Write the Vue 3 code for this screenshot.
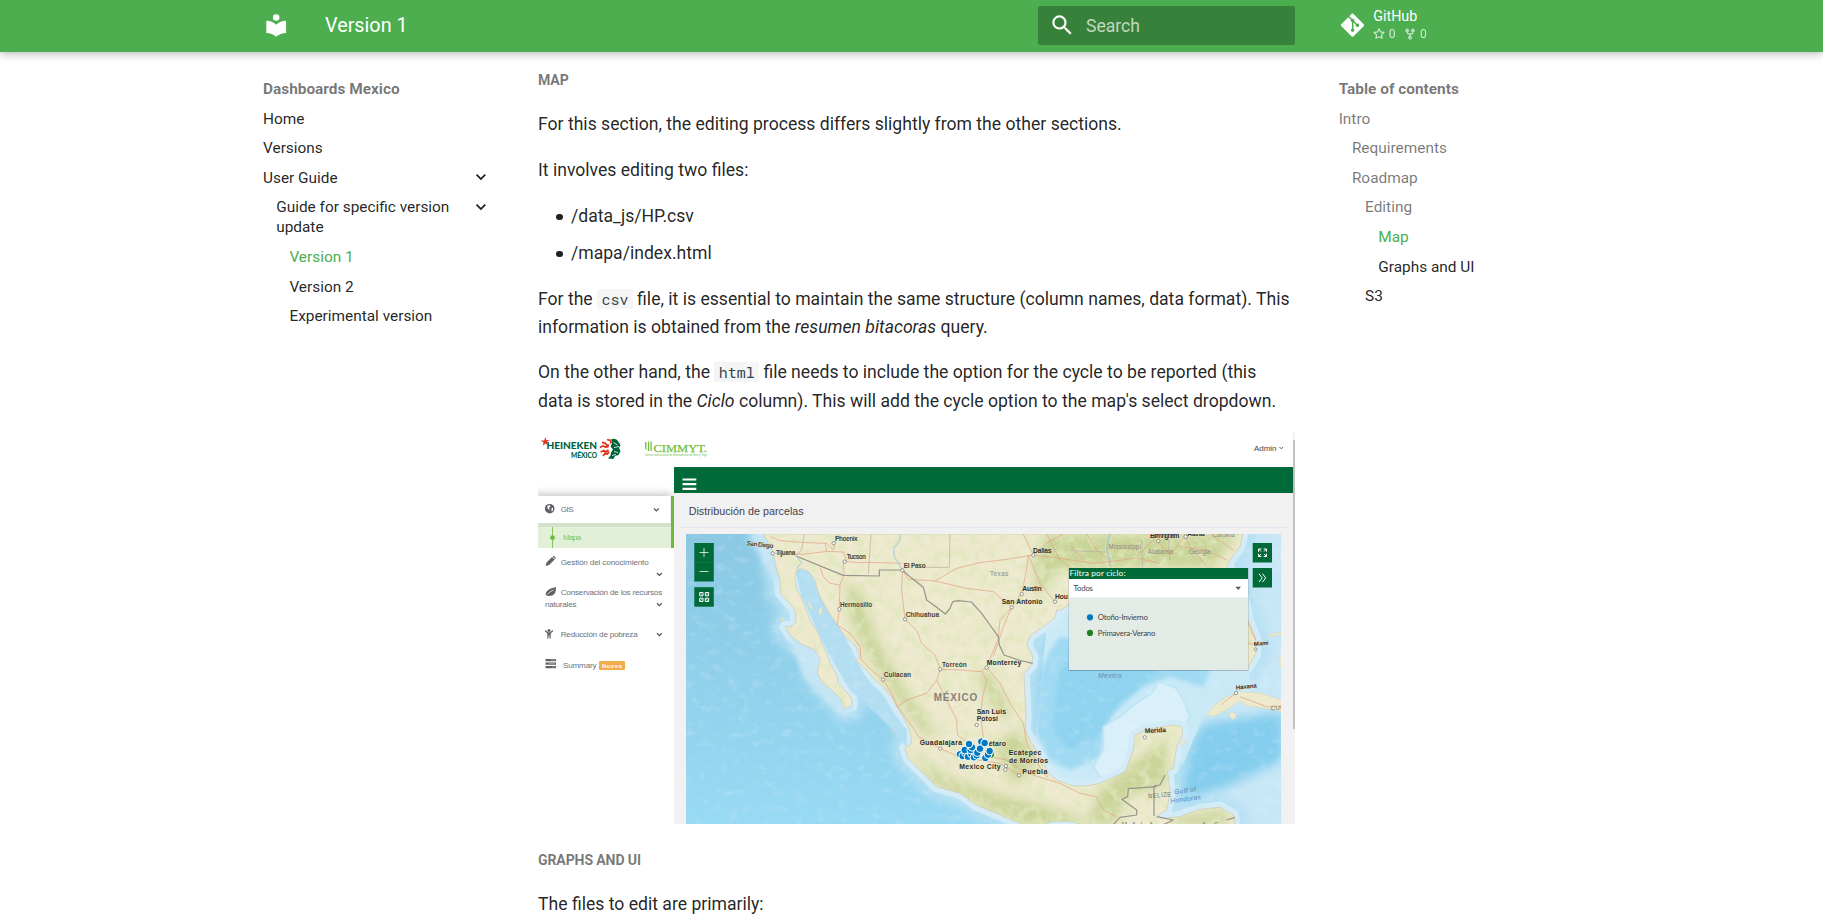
<script setup>
const nav = [
  { t: 'Home', l: 0 },
  { t: 'Versions', l: 0 },
  { t: 'User Guide', l: 0, open: true },
  { t: 'Guide for specific version update', l: 1, open: true },
  { t: 'Version 1', l: 2, active: true },
  { t: 'Version 2', l: 2 },
  { t: 'Experimental version', l: 2 },
]
const toc = [
  { t: 'Intro', l: 0, passed: true },
  { t: 'Requirements', l: 1, passed: true },
  { t: 'Roadmap', l: 1, passed: true },
  { t: 'Editing', l: 2, passed: true },
  { t: 'Map', l: 3, active: true },
  { t: 'Graphs and UI', l: 3 },
  { t: 'S3', l: 2 },
]
// Map geometry is in thirds of a pixel, origin at (760, 530)
const land =
  'M8 12L28 40 40 70 48 110 60 150 62 190 85 215 105 240 108 275 96 290 75 290 95 320 125 342 165 360 180 388 172 430 185 455 215 480 245 510 252 535 275 527 276 508 262 490 235 460 228 430 210 400 200 370 185 340 175 310 155 280 140 245 125 205 110 175 105 140 112 118 130 116 150 130 165 150 172 180 185 210 205 245 232 285 255 320 285 345 300 375 288 392 320 420 345 450 370 470 395 500 410 530 430 560 450 600 455 640 435 655 445 685 490 730 530 770 600 790 650 825 720 855 790 884 L845 884 Q905 862 970 884 L1425 884 1420 855 1380 832 1320 838 1260 860 1210 865 1190 858 1220 840 1230 790 1225 740 1222 722 1240 716 1245 680 1250 650 1268 610 1265 590 1245 585 1210 590 1160 600 1125 615 1120 660 1105 700 1095 725 1060 742 1020 760 980 768 940 768 890 750 865 730 845 690 815 640 795 600 798 560 795 500 792 430 815 405 818 380 800 345 812 315 850 290 885 262 890 240 905 240 925 225 1000 210 1100 215 1200 180 1340 190 1400 300 1440 410 1465 410 1488 370 1485 320 1464 270 1450 200 1440 150 1400 110 1410 90 1440 50 1448 12Z'
const cuba =
  'M1340 555L1360 528 1400 500 1440 485 1500 488 1565 510 1565 545 1520 535 1460 528 1440 512 1400 540 1360 560ZM1405 555l8-8 14 2 2 12-12 8zM1265 630l8-4 2 8-6 12-6-4zM1520 318l30-10 15-2v6l-35 8zM1555 385l10-12v38l-6-4z'
const islands = 'M140 215l8 2 12 20-6 2zM176 238l6-6 6 8-4 14-8-2zM66 265l6-4-2 16-4-2zM392 598l6 4 4 12z'
const roads = [
  'M30 20 60 32 140 38 200 40 220 60 225 40 235 12',
  'M40 70 130 73 200 64 250 66 260 95 300 98 330 97 425 100',
  'M195 38 200 64M250 95 252 135 240 165 210 160 190 140 180 110M240 165 238 235 232 285 270 310 300 350 303 390 340 425 370 450 395 490 413 530 450 580 475 620 540 655 600 682 720 700 776 735',
  'M427 120 425 180 435 268 470 300 485 340 525 375 541 418 530 450 565 520 590 570 592 615 625 640',
  'M541 418 600 420 665 425 680 412 715 325 720 270 755 232 785 190 800 120 805 75 840 160 885 215',
  'M413 530 440 510 500 490 530 450M427 120 445 148 525 153 620 175 700 185 755 232M525 153 590 115 660 98 740 88 820 75 900 85 1000 100 1090 90 1130 84 1200 100',
  'M665 425 680 450 668 500 662 560 672 640M680 412 720 460 750 520 790 580 800 640 850 730 865 742',
  'M690 680 740 690 790 725 840 742 900 760 960 790 1010 800 1030 840 1070 860M755 232 730 290 700 380',
  'M820 75 790 12M820 75 860 40 910 12M930 45 980 100M980 12 1010 60 1055 95M1130 80 1190 20M1190 30 1230 75 1280 12M1260 50 1340 60 1400 90M1275 12 1290 50 1340 110M1350 12 1420 60M860 12 900 90 930 112',
  'M1385 525 1400 510 1428 490M1440 500 1520 530 1565 530M1464 340 1490 345M1460 270 1487 330',
]
const borders = [
  'M108 78 250 136 358 138 358 120 427 120 452 142 490 172 500 210 530 232 556 252 570 235 578 215 595 212 634 216 665 250 690 285 715 320 718 345 732 375 775 390 818 400',
  'M1190 770 1105 776 1103 800 1085 808 1130 840 1130 855 1080 862 1060 884M1182 768 1182 858M1182 768 1200 765 1215 735M1190 860 1240 870 1210 884M1400 870 1425 862',
]
const states = [
  'M333 12 325 132M570 12 568 112 470 112M133 12 125 60 108 78M930 62 1043 66M1050 12 1040 50 1052 110M1145 30 1148 110M1230 90 1225 20',
]
const cities = [
  ['Phoenix', 225, 33, 68, 221, 40], ['Tucson', 260, 88, 58, 254, 95], ['Tijuana', 48, 76, 58, 38, 70],
  ['El Paso', 431, 113, 66, 427, 121], ['Hermosillo', 240, 231, 97, 238, 238], ['Chihuahua', 437, 260, 100, 435, 268],
  ['Torreón', 546, 410, 74, 541, 418], ['Culiacan', 371, 440, 82, 369, 449],
]
const heavy = [
  ['Monterrey', 680, 404, 104, 680, 413], ['San Luis', 650, 552, 88, 650, 585], ['Potosi', 650, 574, 64, 0, 0],
  ['Guadalajara', 479, 645, 127, 541, 656], ['Mexico City', 598, 718, 124, 736, 719], ['étaro', 686, 649, 52, 0, 0],
  ['Ecatepec', 746, 676, 98, 738, 708], ['de Morelos', 747, 699, 117, 0, 0], ['Puebla', 787, 731, 75, 777, 736],
  ['Dallas', 819, 68, 56, 820, 76], ['Austin', 787, 183, 58, 785, 192], ['San Antonio', 725, 222, 122, 755, 232],
  ['Hou', 885, 206, 39, 885, 215], ['Birmingham', 1170, 25, 88, 1195, 33], ['Atlanta', 1282, 17, 52, 1277, 20],
]
const pins = [
  [600, 673], [608, 678], [616, 668], [624, 680], [614, 660], [634, 672], [642, 682], [650, 676], [632, 660], [664, 635],
  [676, 684], [636, 652], [627, 642], [652, 668], [660, 656], [674, 639], [684, 674], [689, 663],
]
</script>

<template>
  <div class="page">
    <header class="header">
      <svg class="logo" viewBox="0 0 24 24"><path d="M12 8a3 3 0 0 0 3-3 3 3 0 0 0-3-3 3 3 0 0 0-3 3 3 3 0 0 0 3 3m0 3.54C9.64 9.35 6.5 8 3 8v11c3.5 0 6.64 1.35 9 3.54 2.36-2.19 5.5-3.54 9-3.54V8c-3.5 0-6.64 1.35-9 3.54Z" /></svg>
      <div class="title">Version 1</div>
      <div class="search">
        <svg viewBox="0 0 24 24"><path d="M9.5 3A6.5 6.5 0 0 1 16 9.5c0 1.61-.59 3.09-1.56 4.23l.27.27h.79l5 5-1.5 1.5-5-5v-.79l-.27-.27A6.52 6.52 0 0 1 9.5 16 6.5 6.5 0 0 1 3 9.5 6.5 6.5 0 0 1 9.5 3m0 2C7 5 5 7 5 9.5S7 14 9.5 14 14 12 14 9.5 12 5 9.5 5" /></svg>
        <span>Search</span>
      </div>
      <div class="source">
        <svg class="git" viewBox="0 0 448 512"><path d="M439.55 236.05 244 40.45a28.87 28.87 0 0 0-40.81 0l-40.66 40.63 51.52 51.52c27.06-9.14 52.68 16.77 43.39 43.68l49.66 49.66c34.23-11.8 61.18 31 35.47 56.69-26.49 26.49-70.21-2.87-56-37.34L240.22 199v121.85c25.3 12.54 22.26 41.85 9.08 55a34.34 34.34 0 0 1-48.55 0c-17.57-17.6-11.07-46.91 11.25-56v-123c-20.8-8.51-24.6-30.74-18.64-45L142.57 101 8.45 235.14a28.86 28.86 0 0 0 0 40.81l195.61 195.6a28.86 28.86 0 0 0 40.8 0l194.69-194.69a28.86 28.86 0 0 0 0-40.81z" /></svg>
        <div class="repo">
          <div class="repo-name">GitHub</div>
          <div class="facts">
            <svg viewBox="0 0 16 16"><path d="M8 .25a.75.75 0 0 1 .673.418l1.882 3.815 4.21.612a.75.75 0 0 1 .416 1.279l-3.046 2.97.719 4.192a.751.751 0 0 1-1.088.791L8 12.347l-3.766 1.98a.75.75 0 0 1-1.088-.79l.72-4.194L.818 6.374a.75.75 0 0 1 .416-1.28l4.21-.611L7.327.668A.75.75 0 0 1 8 .25Zm0 2.445L6.615 5.5a.75.75 0 0 1-.564.41l-3.097.45 2.24 2.184a.75.75 0 0 1 .216.664l-.528 3.084 2.769-1.456a.75.75 0 0 1 .698 0l2.77 1.456-.53-3.084a.75.75 0 0 1 .216-.664l2.24-2.183-3.096-.45a.75.75 0 0 1-.564-.41L8 2.694Z" /></svg>
            <span class="stars">0</span>
            <svg viewBox="0 0 16 16"><path d="M5 5.372v.878c0 .414.336.75.75.75h4.5a.75.75 0 0 0 .75-.75v-.878a2.25 2.25 0 1 1 1.5 0v.878a2.25 2.25 0 0 1-2.25 2.25h-1.5v2.128a2.251 2.251 0 1 1-1.5 0V8.5h-1.5A2.25 2.25 0 0 1 3.5 6.25v-.878a2.25 2.25 0 1 1 1.5 0ZM5 3.25a.75.75 0 1 0-1.5 0 .75.75 0 0 0 1.5 0Zm6.75.75a.75.75 0 1 0 0-1.5.75.75 0 0 0 0 1.5Zm-3 8.75a.75.75 0 1 0-1.5 0 .75.75 0 0 0 1.5 0Z" /></svg>
            <span>0</span>
          </div>
        </div>
      </div>
    </header>

    <main class="main">
      <nav class="side">
        <div class="side-title">Dashboards Mexico</div>
        <a v-for="n in nav" :key="n.t" class="item" :class="['lv' + n.l, { active: n.active }]">
          <span>{{ n.t }}</span>
          <svg v-if="n.open" viewBox="0 0 24 24"><path d="M7.41 8.58 12 13.17l4.59-4.59L18 10l-6 6-6-6z" /></svg>
        </a>
      </nav>

      <article class="content">
        <h5>Map</h5>
        <p>For this section, the editing process differs slightly from the other sections.</p>
        <p>It involves editing two files:</p>
        <ul>
          <li>/data_js/HP.csv</li>
          <li>/mapa/index.html</li>
        </ul>
        <p>For the <code>csv</code> file, it is essential to maintain the same structure (column names, data format). This information is obtained from the <em>resumen bitacoras</em> query.</p>
        <p>On the other hand, the <code>html</code> file needs to include the option for the cycle to be reported (this data is stored in the <em>Ciclo</em> column). This will add the cycle option to the map's select dropdown.</p>

        <svg class="shot" viewBox="538 432 757 392">
          <defs>
            <linearGradient id="sea" x1="0" y1="0" x2="0" y2="1">
              <stop offset="0" stop-color="#8ac8e3" /><stop offset="1" stop-color="#98d9f3" />
            </linearGradient>
            <filter id="terrain" x="0" y="0" width="100%" height="100%">
              <feTurbulence type="fractalNoise" baseFrequency=".035" numOctaves="5" seed="7" />
              <feColorMatrix values="0 0 0 0 .74  0 0 0 0 .8  0 0 0 0 .5  3 0 0 0 -1.3" />
            </filter>
            <filter id="ripple" x="0" y="0" width="100%" height="100%">
              <feTurbulence type="fractalNoise" baseFrequency=".03 .04" numOctaves="4" seed="3" />
              <feColorMatrix values="0 0 0 0 .84  0 0 0 0 .94  0 0 0 0 .98  0 3 0 0 -1.6" />
            </filter>
            <filter id="soft"><feGaussianBlur stdDeviation="7" /></filter>
            <filter id="mist" x="-20%" y="-20%" width="140%" height="140%"><feGaussianBlur stdDeviation="16" /></filter>
            <filter id="drop" x="-20%" y="-60%" width="140%" height="220%"><feGaussianBlur stdDeviation="4" /></filter>
            <clipPath id="mapclip"><rect x="686" y="534" width="595" height="290" /></clipPath>
            <clipPath id="landclip"><path :d="land" /></clipPath>
            <clipPath id="sideclip"><rect x="538" y="467" width="136" height="100" /></clipPath>
          </defs>

          <rect x="538" y="432" width="757" height="392" fill="#fff" />
          <rect x="674" y="493" width="621" height="331" fill="#f1f1f1" />
          <rect x="674" y="467" width="619" height="26" fill="#006b38" />
          <rect x="1293" y="432" width="2" height="392" fill="#f1f1f1" />
          <rect x="1293" y="440" width="2" height="289" fill="#c1c1c1" />

          <!-- brand logos -->
          <path d="M545.3 437l1 3.3 3.3-.2-2.7 2 1.4 3.3-2.9-1.8-2.6 2.2.7-3.4-2.7-1.8 3.4-.2z" fill="#e2341d" />
          <g font-family="Lato, Open Sans, sans-serif" font-weight="900" fill="#00623b">
            <text x="546.5" y="449" font-size="9.5" textLength="50.5" lengthAdjust="spacingAndGlyphs">HEINEKEN</text>
            <text x="571" y="457.7" font-size="6.8" textLength="26" lengthAdjust="spacingAndGlyphs">MÉXICO</text>
          </g>
          <g fill="none" stroke="#e2341d" stroke-width="1.8">
            <path d="M600 447.500l3-1.500 2.500 1 3-.5M602 442.500l3 .5 1.500 2 2.500.5M607 439.500l3.500 1 .5 3M600.500 452l3.500-1.500 1.500 1.500 3-2M603 456l2-2.500 2.500.5 1.500-2.500" />
          </g>
          <path d="M611.500 439q5-1 7 3l2 3-1.500 3 1.500 3-2 4-3.500 1-1.500 3-5.500-.5 2.500-3 .5-3 2-3-2.500-3 1.500-3z" fill="#00623b" />
          <path d="M613.500 442.500l4 2.500M614 447.500l5-1M614 451.500l4 1M612 455.500l4-1" stroke="#fff" stroke-width=".8" />
          <g fill="#75c043">
            <path d="M645 442h1.400v6q0 1.500 1 2-2.400 0-2.400-2.500zM647.900 441.500h1.300v9.500h-1.300zM650.400 441.500h1.300v9.500h-1.300z" />
            <text x="653.500" y="451.600" font-family="Liberation Serif, serif" font-size="10.800" stroke="#75c043" stroke-width=".25" textLength="53.500" lengthAdjust="spacingAndGlyphs">CIMMYT.</text>
            <text x="645" y="456" font-family="Liberation Sans, sans-serif" font-size="2.600" textLength="62">Centro Internacional de Mejoramiento de Maíz y Trigo</text>
          </g>
          <text x="1254" y="451" font-family="Liberation Sans, sans-serif" font-size="8" fill="#444" textLength="22.500">Admin</text>
          <path d="M1279.500 447l1.800 1.800 1.800-1.800" fill="none" stroke="#444" stroke-width=".9" />

          <path d="M682.500 479.500H696.300M682.500 484.200H696.300M682.500 488.800H696.300" stroke="#fff" stroke-width="2.200" />
          <text x="688.700" y="515" font-family="Liberation Sans, sans-serif" font-size="10.700" fill="#40424f" textLength="115">Distribución de parcelas</text>
          <path d="M680 527.500H1287" stroke="#dfe4ee" />

          <!-- sidebar of the dashboard -->
          <g clip-path="url(#sideclip)">
            <rect x="534" y="494" width="138" height="31" fill="#000" opacity=".24" filter="url(#drop)" />
          </g>
          <rect x="538" y="523" width="133" height="25" fill="#e2f0d7" />
          <rect x="538" y="523" width="133" height="4" fill="#000" opacity=".06" />
          <rect x="538" y="496" width="132.500" height="27" fill="#fff" />
          <rect x="671" y="496" width="3" height="52" fill="#70b83c" />
          <path d="M552.500 527v21" stroke="#70b83c" stroke-width=".8" />
          <circle cx="552.500" cy="537.700" r="2.400" fill="#70b83c" />
          <g font-family="Liberation Sans, sans-serif" font-size="8.100" fill="#6c7078">
            <text x="560.700" y="512.300" textLength="13">GIS</text>
            <text x="563" y="539.700" fill="#7cc653" textLength="18">Mapa</text>
            <text x="560.700" y="564.500" textLength="88">Gestión del conocimiento</text>
            <text x="560.700" y="595" textLength="101.500">Conservación de los recursos</text>
            <text x="545" y="606.500" textLength="31.500">naturales</text>
            <text x="560.700" y="637" textLength="77">Reducción de pobreza</text>
            <text x="563" y="667.500" textLength="33.500">Summary</text>
          </g>
          <rect x="599" y="661" width="26" height="9" rx="1" fill="#f0ad4e" />
          <text x="602" y="667.700" font-family="Liberation Sans, sans-serif" font-weight="700" font-size="5.600" fill="#fff" textLength="20">Nuevo</text>
          <g fill="none" stroke="#555" stroke-width="1.300">
            <path d="M654 508.500l2.400 2.400 2.400-2.400M657 573l2.400 2.400 2.400-2.400M657 603.300l2.400 2.400 2.400-2.400M657 633.300l2.400 2.400 2.400-2.400" />
          </g>
          <g fill="#5f6368">
            <circle cx="549.700" cy="508.700" r="4.800" />
            <path d="M547.500 506l2-1 1 1.500-1.500 1 .5 2.500-2-1.500zM551.500 508.500l1.500-1v3l-1.500 1z" fill="#fff" />
            <path d="M545.500 566l1-3.500 5.500-5.500 2.600 2.600-5.500 5.500zM552.600 556.500l1-.8 2.400 2.400-1 1z" />
            <path d="M545.500 595q0-6 10.500-8 .5 9-7 9-1.200 0-2-.6z" />
            <path d="M547.500 594.500q2-3 6-4.500" stroke="#fff" stroke-width=".7" fill="none" />
            <circle cx="549" cy="630.500" r="1.500" />
            <path d="M545.400 630l2.600 2.200h2l2.600-2.200.7.900-2.600 2.600V638.500h-1.200v-3h-1v3h-1.200v-5l-2.600-2.600z" />
            <path d="M545.500 659h10.500v2.300h-10.500zM545.500 662.500h10.500v2.300h-10.500zM545.500 666h10.500v2.300h-10.500z" />
            <path d="M551 660.100h4M549 663.600h6M552 667.100h3" stroke="#bbb" stroke-width=".6" />
          </g>

          <!-- map -->
          <g clip-path="url(#mapclip)">
            <rect x="686" y="534" width="595" height="290" fill="url(#sea)" />
            <g transform="translate(760 530) scale(.33333)">
              <rect x="1250" y="0" width="320" height="884" fill="#c8e7f6" />
              <path d="M1260 640L1340 580 1460 560 1570 545V690L1400 770 1250 830z" fill="#84cdee" filter="url(#mist)" />
              <path :d="land" fill="none" stroke="#b5e0f3" stroke-width="80" stroke-linejoin="round" filter="url(#mist)" />
              <path d="M800 884L860 290 950 200 1460 200 1470 480 1330 560 1270 700 1100 760 900 790z" fill="#c9e9f7" />
              <path d="M830 610L835 460 860 380 900 320 1000 340 1260 390 1350 420 1330 470 1230 440 1150 470 1060 550 1030 620 1020 680 930 720 870 690z" fill="#9fd9f2" filter="url(#soft)" />
              <path d="M880 600L895 430 960 350 1200 415 1060 540 1010 620 930 660z" fill="#8fd3f0" filter="url(#soft)" />
              <path d="M1030 590L1080 560 1120 525 1175 490 1195 455 1250 475 1270 510 1290 560 1250 640 1080 740 1020 740 1000 710 1030 660z" fill="#d9f0fa" stroke="#c0e5f5" stroke-width="6" stroke-linejoin="round" />
              <path :d="land" fill="none" stroke="#d3ebf7" stroke-width="34" stroke-linejoin="round" />
              <path d="M60 190L10 90-30 12H20L60 110zM75 290L130 440 200 515 250 560 290 540 175 430 170 360z" fill="#c5e5f4" filter="url(#soft)" />
              <path d="M105 115L150 125 190 210 260 330 310 430 440 600 440 650 390 590 270 480 200 360 125 200z" fill="#b3def1" />
              <rect x="-222" y="12" width="1790" height="872" filter="url(#ripple)" opacity=".2" />
              <path :d="cuba" fill="#ece9cc" stroke="#cbc7a6" />
              <path :d="islands" fill="#ece9cc" stroke="#cbc7a6" />
              <path :d="land" fill="#eeead0" stroke="#bdbba0" stroke-width="1.500" />
              <g clip-path="url(#landclip)">
                <g fill="#bccc84" opacity=".75" filter="url(#mist)">
                  <path d="M260 160L300 180 350 330 430 470 530 610 500 620 420 520 320 370 270 260z" />
                  <path d="M650 430L690 430 750 540 740 570 690 520z" />
                  <path d="M450 660L560 740 700 790 900 840 1000 884H790L520 760z" />
                  <path d="M860 12H1430L1360 115H900L830 200 820 100z" />
                  <path d="M1120 700L1220 620 1220 760 1100 800 1060 884H980L1020 780zM1250 860L1400 840V884H1240z" />
                  <path d="M780 600L830 700 760 770 700 640z" />
                </g>
                <rect x="0" y="12" width="1500" height="872" filter="url(#terrain)" opacity=".85" />
              </g>
              <g fill="none" stroke-linejoin="round">
                <path v-for="r in roads" :key="r" :d="r" stroke="#e3a387" stroke-width="2.200" />
                <path v-for="s in states" :key="s" :d="s" stroke="#b6b4a2" stroke-width="2.200" />
                <path v-for="b in borders" :key="b" :d="b" stroke="#96948a" stroke-width="3.600" />
                <path d="M427 120L402 78 402 55 420 30 420 12M108 78L125 98 110 115M1040 50L1050 110M1048 12L1040 60" stroke="#9ec9dd" stroke-width="3" />
              </g>
              <g font-family="Liberation Sans, sans-serif" font-weight="700">
                <g fill="#42423a" stroke="#eeead0" stroke-width="1.500" paint-order="stroke" font-size="19.500">
                  <text v-for="c in cities" :key="c[0]" :x="c[1]" :y="c[2]" :textLength="c[3]">{{ c[0] }}</text>
                  <text x="-40" y="50" textLength="80" transform="rotate(6 0 45)">San Diego</text>
                </g>
                <g fill="#2a2925" stroke="#eeead0" stroke-width="1.500" paint-order="stroke" font-size="20.500">
                  <text v-for="c in heavy" :key="c[0]" :x="c[1]" :y="c[2]" :textLength="c[3]">{{ c[0] }}</text>
                  <text x="1155" y="610" textLength="63" transform="rotate(-4 1155 610)">Merida</text>
                  <text x="1428" y="479" font-size="18" textLength="63" transform="rotate(-6 1428 479)">Havana</text>
                  <text x="1482" y="348" font-size="17" textLength="44" transform="rotate(-5 1482 348)">Miami</text>
                </g>
                <text x="521" y="513" font-size="30" fill="#83827a" textLength="131">MÉXICO</text>
                <g font-weight="400" fill="#8c8b82" font-size="19">
                  <text x="690" y="138" textLength="55">Texas</text>
                  <text x="1045" y="56" textLength="98">Mississippi</text>
                  <text x="1163" y="72" textLength="76">Alabama</text>
                  <text x="1286" y="73" textLength="65">Georgia</text>
                  <text x="1358" y="22" textLength="66">Carolina</text>
                  <text x="1165" y="805" fill="#77766f" textLength="70" transform="rotate(-5 1165 805)">BELIZE</text>
                  <text x="1532" y="541" fill="#77766f" textLength="55" transform="rotate(-3 1532 541)">CUBA</text>
                  <text x="1085" y="890" fill="#77766f" textLength="95">MALA</text>
                  <text x="1325" y="890" fill="#77766f" textLength="50">AS</text>
                </g>
                <g font-style="italic" font-weight="400" fill="#5c87aa" font-size="20">
                  <text x="1014" y="443" textLength="70">Mexico</text>
                  <text x="1243" y="793" textLength="66" transform="rotate(-8 1243 793)">Gulf of</text>
                  <text x="1232" y="820" textLength="92" transform="rotate(-8 1232 820)">Honduras</text>
                </g>
              </g>
              <g fill="#fff" stroke="#6a6a63" stroke-width="2">
                <template v-for="c in [...cities, ...heavy]" :key="c[0]">
                  <circle v-if="c[4]" :cx="c[4]" :cy="c[5]" r="5" />
                </template>
                <circle cx="1154" cy="622" r="5" /><circle cx="1428" cy="489" r="5" /><circle cx="1487" cy="358" r="4" />
              </g>
              <circle cx="692" cy="674" r="12" fill="#2a8f26" stroke="#fff" stroke-width="3" />
              <circle v-for="(p, i) in pins" :key="i" :cx="p[0]" :cy="p[1]" r="11.500" fill="#0079c1" stroke="#fff" stroke-width="3" />
            </g>
          </g>

          <!-- map controls -->
          <g fill="#006b38">
            <rect x="694.300" y="543" width="19.500" height="38.500" /><rect x="694.300" y="587.200" width="19.500" height="19.500" />
            <rect x="1252.700" y="543" width="19.300" height="19.500" /><rect x="1252.700" y="568" width="19.300" height="19.500" />
          </g>
          <path d="M694.300 562.300h19.500" stroke="#1e8052" stroke-width=".7" />
          <path d="M699.500 552.500h9M704 548v9M699.500 571.500h9" stroke="#dcebe2" stroke-width=".9" />
          <g fill="none" stroke="#fff" stroke-width="1">
            <path d="M699.700 592.500h3.300v3.300h-3.300zM705.300 592.500h3.300v3.300h-3.300zM699.700 598.200h3.300v3.300h-3.300zM705.300 598.200h3.300v3.300h-3.300z" />
            <path d="M700 592.800l2.800 2.800M708.300 592.800l-2.800 2.800M700 601.200l2.800-2.800M708.300 601.200l-2.800-2.800" stroke-width=".6" />
            <path d="M1261 551.500l-2.500-2.500m0 2.800v-2.800h2.800M1264 551.500l2.500-2.500m0 2.800v-2.800h-2.800M1261 554l-2.500 2.500m0-2.800v2.800h2.800M1264 554l2.500 2.500m0-2.800v2.800h-2.800" />
            <path d="M1259 573.700l3.200 4.200-3.200 4.200M1262.500 573.700l3.200 4.200-3.200 4.200" />
          </g>

          <!-- cycle filter -->
          <rect x="1068.500" y="568" width="180" height="103" fill="#000" opacity=".22" />
          <rect x="1069" y="568" width="179" height="102" fill="#e2ebe6" />
          <rect x="1069" y="568" width="179" height="11" fill="#006b38" />
          <rect x="1069" y="579" width="179" height="18.500" fill="#fff" />
          <path d="M1235.500 586.800h5.400l-2.700 3.300z" fill="#555" />
          <circle cx="1090" cy="617.300" r="3.100" fill="#0079c1" /><circle cx="1090" cy="632.900" r="3.100" fill="#1f8020" />
          <g font-family="Lato, sans-serif" font-size="7.800" fill="#444">
            <text x="1069.500" y="576" fill="#fff" font-size="8.400" textLength="56">Filtra por ciclo:</text>
            <text x="1073.500" y="591" textLength="19.500">Todos</text>
            <text x="1097.800" y="620.200" textLength="50">Otoño-Invierno</text>
            <text x="1097.800" y="635.800" textLength="57.500">Primavera-Verano</text>
          </g>
        </svg>

        <h5>Graphs and UI</h5>
        <p>The files to edit are primarily:</p>
      </article>

      <nav class="side toc">
        <div class="side-title">Table of contents</div>
        <a v-for="n in toc" :key="n.t" class="item" :class="['lv' + n.l, { active: n.active, passed: n.passed }]"><span>{{ n.t }}</span></a>
      </nav>
    </main>
  </div>
</template>

<style>
html,
body {
  margin: 0;
  overflow: hidden;
  background: #fff;
}
</style>

<style scoped>
.page {
  height: 917px;
  overflow: hidden;
  font-family: Roboto, 'Liberation Sans', sans-serif;
  color: rgba(0, 0, 0, 0.87);
  font-feature-settings: 'kern', 'liga';
}
.header {
  position: relative;
  z-index: 1;
  box-sizing: border-box;
  height: 52px;
  padding-left: 262.700px;
  display: flex;
  align-items: center;
  background: #4cae4f;
  color: #fff;
  box-shadow: 0 0 4.400px rgba(0, 0, 0, 0.1), 0 4.400px 8.800px rgba(0, 0, 0, 0.2);
}
.header svg {
  fill: currentColor;
  flex: none;
}
.logo {
  width: 26.400px;
  height: 26.400px;
  margin-top: -2px;
}
.title {
  width: 713px;
  margin-left: 35.900px;
  font-size: 19.800px;
  line-height: 26px;
  margin-top: -1px;
}
.search {
  box-sizing: border-box;
  width: 257px;
  height: 39.600px;
  margin-top: -1px;
  padding-left: 10.600px;
  display: flex;
  align-items: center;
  border-radius: 2.200px;
  background: rgba(0, 0, 0, 0.26);
  font-size: 17.600px;
}
.search svg {
  width: 26.400px;
  height: 26.400px;
  margin-top: -1px;
}
.search span {
  margin-left: 11px;
  color: rgba(255, 255, 255, 0.7);
}
.source {
  display: flex;
  align-items: center;
  margin-left: 45.800px;
}
.git {
  width: 23.100px;
  height: 26.400px;
  margin-top: -1px;
}
.repo {
  margin-left: 9.400px;
  margin-top: -2px;
}
.repo-name {
  font-size: 14.300px;
  line-height: 18px;
}
.facts {
  display: flex;
  align-items: center;
  font-size: 12.100px;
  line-height: 17px;
  margin-top: 0.500px;
  opacity: 0.75;
}
.facts svg {
  width: 12.100px;
  height: 12.100px;
  margin-right: 3.500px;
}
.stars {
  margin-right: 8.800px;
}
.main {
  display: flex;
  padding-left: 263px;
}
.side {
  width: 228px;
  padding-top: 27.050px;
  flex: none;
  font-size: 15.400px;
  line-height: 20.020px;
}
.side-title {
  font-weight: 700;
  color: rgba(0, 0, 0, 0.54);
}
.item {
  display: flex;
  justify-content: space-between;
  align-items: flex-start;
  margin-top: 9.580px;
}
.item svg {
  width: 19.800px;
  height: 19.800px;
  margin-top: -0.700px;
  flex: none;
  fill: currentColor;
}
.item span {
  max-width: 178px;
}
.lv1 {
  padding-left: 13.200px;
}
.lv2 {
  padding-left: 26.400px;
}
.lv3 {
  padding-left: 39.600px;
}
.passed {
  color: rgba(0, 0, 0, 0.54);
}
.active {
  color: #4cae4f;
}
.toc {
  margin-left: 43.700px;
}
.content {
  width: 757px;
  margin-left: 47px;
  padding-top: 16.800px;
  flex: none;
  font-size: 17.600px;
  line-height: 28.160px;
}
.content p {
  margin: 0 0 17.600px;
}
.content h5 {
  margin: 0 0 19px;
  font-size: 14.080px;
  line-height: 22.530px;
  font-weight: 700;
  letter-spacing: -0.01em;
  text-transform: uppercase;
  color: rgba(0, 0, 0, 0.54);
}
.content .shot + h5 {
  margin-bottom: 18.200px;
}
.content ul {
  margin: 0 0 17.600px 11px;
  padding: 0;
  list-style: none;
}
.content li {
  display: flex;
  align-items: center;
  margin-left: 7.400px;
}
.content li::before {
  content: '';
  width: 6.200px;
  height: 6.200px;
  margin: 1.500px 8.400px 0 0;
  border-radius: 50%;
  background: currentColor;
}
.content li + li {
  margin-top: 8.800px;
}
.content code {
  padding: 0 4.400px;
  border-radius: 2.200px;
  background: #f5f5f5;
  color: #36464e;
  font-family: 'Roboto Mono', 'Liberation Mono', monospace;
  font-size: 14.960px;
}
.shot {
  display: block;
  width: 757px;
  height: 392px;
  margin-top: -0.600px;
  margin-bottom: 25.500px;
}
</style>
